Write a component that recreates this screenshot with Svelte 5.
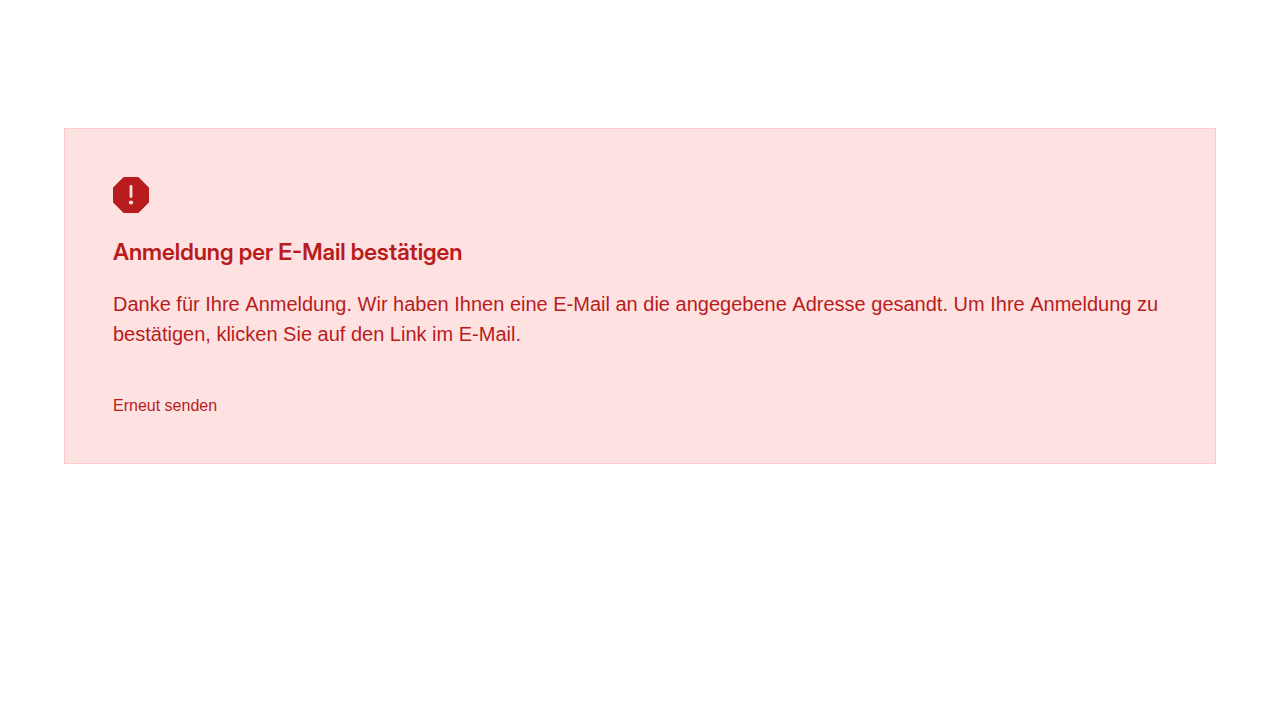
<script>
  const title = 'Anmeldung per E-Mail bestätigen';
  const message =
    'Danke für Ihre Anmeldung. Wir haben Ihnen eine E-Mail an die angegebene Adresse gesandt. Um Ihre Anmeldung zu bestätigen, klicken Sie auf den Link im E-Mail.';
</script>

<main>
  <section class="notice" aria-labelledby="notice-title">
    <svg class="icon" viewBox="0 0 36 36" aria-hidden="true">
      <path d="M11.5 0h13q.8 0 1.4.6l9.5 9.5q.6.6.6 1.4v13q0 .8-.6 1.4l-9.5 9.5q-.6.6-1.4.6h-13q-.8 0-1.4-.6L.6 25.9Q0 25.3 0 24.5v-13q0-.8.6-1.4L10.1.6Q10.7 0 11.5 0Z" />
      <path class="mark" d="M18 9.5v10" />
      <circle cx="18" cy="25.5" r="2.1" />
    </svg>
    <h1 id="notice-title">{title}</h1>
    <p>{message}</p>
    <button type="button">Erneut senden</button>
  </section>
</main>

<style>
  :global(body) {
    margin: 0;
    background: #fff;
  }

  main {
    padding: 128px 64px;
    font-family: 'Liberation Sans', Arial, sans-serif;
    color: #b91c1c;
  }

  .notice {
    display: flex;
    flex-direction: column;
    align-items: flex-start;
    padding: 48px;
    border: 1px solid #fecaca;
    background: #fee2e2;
  }

  .icon {
    width: 36px;
    height: 36px;
    fill: #b91c1c;
  }

  .icon circle {
    fill: #fee2e2;
  }

  .icon .mark {
    fill: none;
    stroke: #fee2e2;
    stroke-width: 2.8;
    stroke-linecap: round;
  }

  h1 {
    margin: 24px 0 22px;
    font-family: 'Inter Display', 'Inter Tight', Inter, sans-serif;
    font-size: 23px;
    font-weight: 600;
    line-height: 30px;
  }

  p {
    margin: 0 0 48px;
    font-size: 20px;
    line-height: 30px;
    font-kerning: none;
  }

  button {
    margin: 0;
    padding: 0;
    border: 0;
    background: none;
    color: inherit;
    font: inherit;
    font-size: 16px;
    line-height: 18px;
    cursor: pointer;
  }
</style>
